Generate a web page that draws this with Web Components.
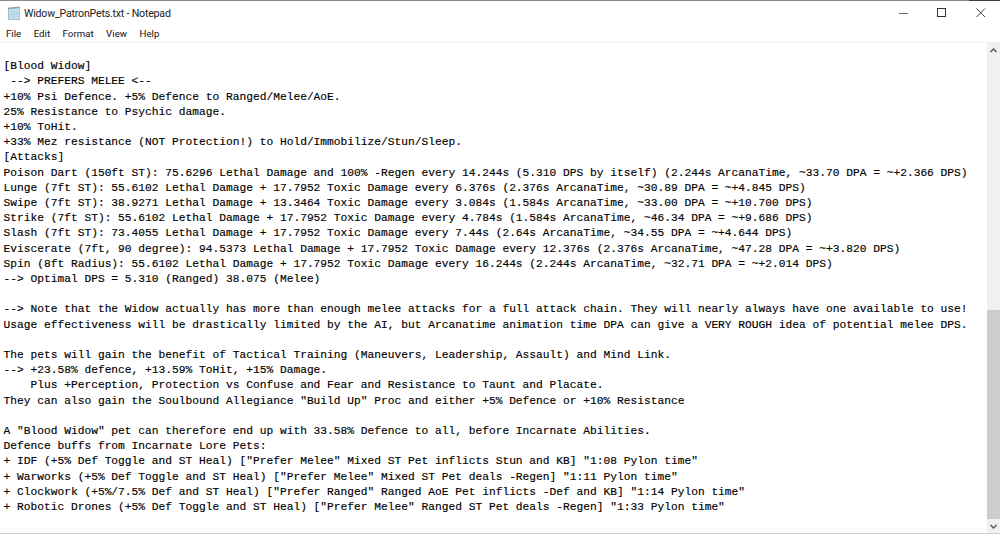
<!DOCTYPE html>
<html>
<head>
<meta charset="utf-8">
<title>Widow_PatronPets.txt - Notepad</title>
<style>
html, body {margin: 0; height: 100%; overflow: hidden; background: #fff;}
</style>
</head>
<body>
<notepad-window>
<title-bar slot="title">Widow_PatronPets.txt - Notepad</title-bar>
<menu-bar slot="menu" items="File,Edit,Format,View,Help"></menu-bar>
<text-view>
[Blood Widow]
 --> PREFERS MELEE <--
+10% Psi Defence. +5% Defence to Ranged/Melee/AoE.
25% Resistance to Psychic damage.
+10% ToHit.
+33% Mez resistance (NOT Protection!) to Hold/Immobilize/Stun/Sleep.
[Attacks]
Poison Dart (150ft ST): 75.6296 Lethal Damage and 100% -Regen every 14.244s (5.310 DPS by itself) (2.244s ArcanaTime, ~33.70 DPA = ~+2.366 DPS)
Lunge (7ft ST): 55.6102 Lethal Damage + 17.7952 Toxic Damage every 6.376s (2.376s ArcanaTime, ~30.89 DPA = ~+4.845 DPS)
Swipe (7ft ST): 38.9271 Lethal Damage + 13.3464 Toxic Damage every 3.084s (1.584s ArcanaTime, ~33.00 DPA = ~+10.700 DPS)
Strike (7ft ST): 55.6102 Lethal Damage + 17.7952 Toxic Damage every 4.784s (1.584s ArcanaTime, ~46.34 DPA = ~+9.686 DPS)
Slash (7ft ST): 73.4055 Lethal Damage + 17.7952 Toxic Damage every 7.44s (2.64s ArcanaTime, ~34.55 DPA = ~+4.644 DPS)
Eviscerate (7ft, 90 degree): 94.5373 Lethal Damage + 17.7952 Toxic Damage every 12.376s (2.376s ArcanaTime, ~47.28 DPA = ~+3.820 DPS)
Spin (8ft Radius): 55.6102 Lethal Damage + 17.7952 Toxic Damage every 16.244s (2.244s ArcanaTime, ~32.71 DPA = ~+2.014 DPS)
--> Optimal DPS = 5.310 (Ranged) 38.075 (Melee)

--> Note that the Widow actually has more than enough melee attacks for a full attack chain. They will nearly always have one available to use!
Usage effectiveness will be drastically limited by the AI, but Arcanatime animation time DPA can give a VERY ROUGH idea of potential melee DPS.

The pets will gain the benefit of Tactical Training (Maneuvers, Leadership, Assault) and Mind Link.
--> +23.58% defence, +13.59% ToHit, +15% Damage.
    Plus +Perception, Protection vs Confuse and Fear and Resistance to Taunt and Placate.
They can also gain the Soulbound Allegiance "Build Up" Proc and either +5% Defence or +10% Resistance

A "Blood Widow" pet can therefore end up with 33.58% Defence to all, before Incarnate Abilities.
Defence buffs from Incarnate Lore Pets:
+ IDF (+5% Def Toggle and ST Heal) ["Prefer Melee" Mixed ST Pet inflicts Stun and KB] "1:08 Pylon time"
+ Warworks (+5% Def Toggle and ST Heal) ["Prefer Melee" Mixed ST Pet deals -Regen] "1:11 Pylon time"
+ Clockwork (+5%/7.5% Def and ST Heal) ["Prefer Ranged" Ranged AoE Pet inflicts -Def and KB] "1:14 Pylon time"
+ Robotic Drones (+5% Def Toggle and ST Heal) ["Prefer Melee" Ranged ST Pet deals -Regen] "1:33 Pylon time"
</text-view>
<scroll-bar slot="scroll"></scroll-bar>
</notepad-window>

<script>
class NotepadWindow extends HTMLElement {
    constructor () {
        super()
        this.attachShadow({mode: 'open'}).innerHTML = `
        <style>
            :host {display: flex; flex-direction: column; width: 1000px; height: 534px; box-sizing: border-box;
                border-bottom: 1px solid #d0d0d0; background: #fff;
                font-family: Roboto, "Liberation Sans", sans-serif; color: #222;}
            .edge {height: 1px; flex: none; background: linear-gradient(to right, #8a8a8a 969px, #3c3c3c 969px);}
            .body {flex: 1; min-height: 0; display: flex; border-top: 1px solid #f0f0f0;}
        </style>
        <div class="edge"></div>
        <slot name="title"></slot>
        <slot name="menu"></slot>
        <div class="body"><slot></slot><slot name="scroll"></slot></div>
        `
    }
}

class TitleBar extends HTMLElement {
    constructor () {
        super()
        this.attachShadow({mode: 'open'}).innerHTML = `
        <style>
            :host {display: flex; align-items: center; height: 24px; padding-left: 7px; font-size: 10.6px; letter-spacing: -.2px; color: #222;}
            .icon {width: 13px; height: 14px; margin-right: 4px; flex: none;}
            .name {flex: 1; white-space: pre;}
            .btn {width: 38.5px; height: 24px; display: flex; align-items: center; justify-content: center; flex: none;}
            .btn svg {display: block;}
        </style>
        <svg class="icon" viewBox="0 0 13 14">
            <path d="M1.5 2.5L12.5 1.5V13.5H1.5Z" fill="#c6e2ec" stroke="#a3bfca"/>
            <path d="M3 6h8M3 8.5h8M3 11h8" stroke="#a9cfdf"/>
            <path d="M1 2.5L12.5 1.2" stroke="#7fa3b8" stroke-width="1.6"/>
        </svg>
        <span class="name"><slot></slot></span>
        <span class="btn"><svg width="10" height="10"><path d="M0 5.5h9" stroke="#666"/></svg></span>
        <span class="btn"><svg width="10" height="10"><rect x=".5" y=".5" width="8" height="8" fill="none" stroke="#333"/></svg></span>
        <span class="btn"><svg width="10" height="10"><path d="M.5 .5l8.5 8.5M9 .5l-8.5 8.5" stroke="#444" fill="none"/></svg></span>
        `
    }
}

class MenuBar extends HTMLElement {
    constructor () {
        super()
        const items = this.getAttribute('items').split(',')
        this.attachShadow({mode: 'open'}).innerHTML = `
        <style>
            :host {display: flex; height: 17px; box-sizing: border-box; padding: 1px 0 0 6px; gap: 12.5px; font-size: 9.7px; line-height: 16px; color: #111;}
        </style>
        ${items.map(i => `<span>${i}</span>`).join('')}
        `
    }
}

class TextView extends HTMLElement {
    constructor () {
        super()
        this.attachShadow({mode: 'open'}).innerHTML = `
        <style>
            :host {display: block; flex: 1; min-width: 0; overflow: hidden; padding: 1px 0 0 3.5px;
                font: 11.24px/15.2px "Liberation Mono", monospace; color: #000; -webkit-text-stroke: .15px #000;}
            .text {white-space: pre;}
        </style>
        <div class="text"><slot></slot></div>
        `
    }
}

class ScrollBar extends HTMLElement {
    constructor () {
        super()
        this.attachShadow({mode: 'open'}).innerHTML = `
        <style>
            :host {display: flex; flex-direction: column; width: 13px; flex: none; background: #f0f0f0;}
            .arrow {height: 14px; display: flex; align-items: center; justify-content: center; flex: none;}
            .gap {flex: 1;}
            .thumb {height: 209px; background: #cdcdcd; flex: none;}
        </style>
        <div class="arrow"><svg width="7" height="5"><path d="M.5 4l3-3 3 3" fill="none" stroke="#555" stroke-width="1.4"/></svg></div>
        <div class="gap"></div>
        <div class="thumb"></div>
        <div class="arrow"><svg width="7" height="5"><path d="M.5 1l3 3 3-3" fill="none" stroke="#555" stroke-width="1.4"/></svg></div>
        `
    }
}

window.customElements.define('notepad-window', NotepadWindow)
window.customElements.define('title-bar', TitleBar)
window.customElements.define('menu-bar', MenuBar)
window.customElements.define('text-view', TextView)
window.customElements.define('scroll-bar', ScrollBar)
</script>
</body>
</html>
